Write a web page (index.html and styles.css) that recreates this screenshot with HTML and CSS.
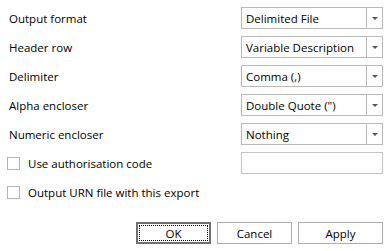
FILE: index.html
```html
<!DOCTYPE html>
<html lang="en">
<head>
  <meta charset="UTF-8" />
  <title>Export options</title>
  <link rel="stylesheet" href="styles.css">
</head>
<body>
  <div class="dialog">
    <div class="fields">
      <label class="label">Output format</label>
      <div class="combo"><span class="value">Delimited File</span><span class="drop"><span class="arrow"></span></span></div>

      <label class="label">Header row</label>
      <div class="combo"><span class="value">Variable Description</span><span class="drop"><span class="arrow"></span></span></div>

      <label class="label">Delimiter</label>
      <div class="combo"><span class="value">Comma (,)</span><span class="drop"><span class="arrow"></span></span></div>

      <label class="label">Alpha encloser</label>
      <div class="combo"><span class="value">Double Quote (")</span><span class="drop"><span class="arrow"></span></span></div>

      <label class="label">Numeric encloser</label>
      <div class="combo"><span class="value">Nothing</span><span class="drop"><span class="arrow"></span></span></div>

      <label class="check"><span class="box"></span>Use authorisation code</label>
      <div class="textbox"></div>

      <label class="check"><span class="box"></span>Output URN file with this export</label>
      <div></div>
    </div>

    <div class="buttons">
      <button class="btn default">OK</button>
      <button class="btn">Cancel</button>
      <button class="btn wide">Apply</button>
    </div>
  </div>
</body>
</html>
```

FILE: styles.css
```css
body {
  margin: 0;
  background: #fff;
  color: #000;
  font-family: 'Open Sans', sans-serif;
  font-size: 11.5px;
}
.dialog {
  padding: 7px 5px 0 7px;
}
.fields {
  display: grid;
  grid-template-columns: 1fr 142px;
  grid-auto-rows: 22px;
  row-gap: 7px;
}
.label {
  display: flex;
  align-items: center;
  padding-left: 2px;
}
.combo {
  display: flex;
  border: 1px solid #b9b9b9;
  box-sizing: border-box;
}
.combo .value {
  flex: 1;
  display: flex;
  align-items: center;
  padding-left: 4px;
  white-space: nowrap;
}
.combo .drop {
  width: 15px;
  border-left: 1px solid #b9b9b9;
  display: flex;
  align-items: center;
  justify-content: center;
}
.arrow {
  width: 0;
  height: 0;
  border-left: 3px solid transparent;
  border-right: 3px solid transparent;
  border-top: 3px solid #555;
  margin-top: 1px;
}
.textbox {
  border: 1px solid #c4c4c4;
  box-sizing: border-box;
}
.check {
  display: flex;
  align-items: center;
  gap: 8px;
}
.box {
  width: 13px;
  height: 13px;
  box-sizing: border-box;
  border: 1px solid #b4b4b4;
  background: #fff;
}
.buttons {
  display: flex;
  justify-content: flex-end;
  gap: 6px;
  margin-top: 19px;
}
.btn {
  width: 75px;
  height: 22px;
  box-sizing: border-box;
  background: #fff;
  border: 1px solid #adadad;
  font-family: 'Open Sans', sans-serif;
  font-size: 11.5px;
  color: #000;
  padding: 0;
}
.btn.wide {
  width: 85px;
}
.btn.default {
  border: 2px solid #707070;
  outline: 1px dotted #000;
  outline-offset: -4px;
}
```
